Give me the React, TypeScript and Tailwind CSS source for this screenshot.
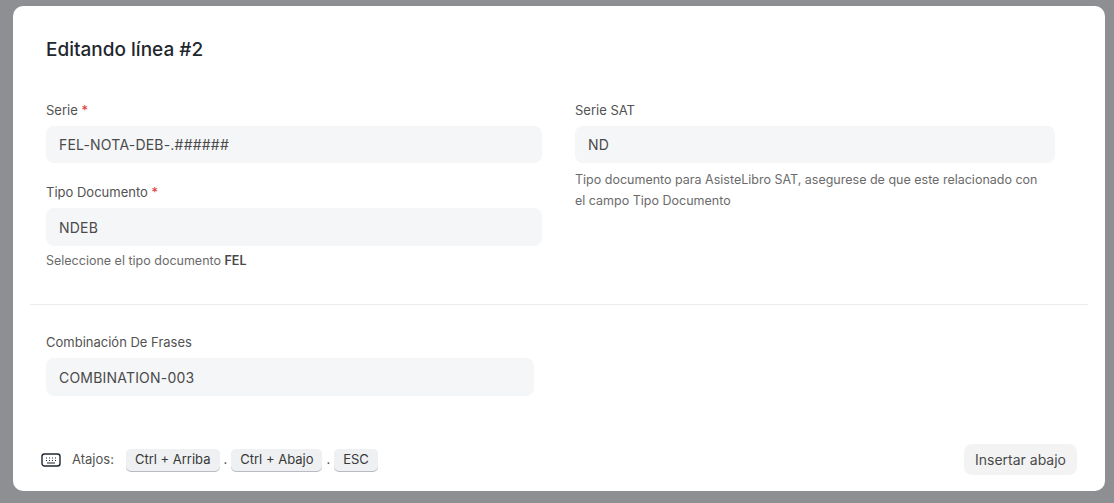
import React from "react";

const Kbd = ({ children }: { children: React.ReactNode }) => (
  <span className="inline-flex h-[22px] items-center rounded-[5px] bg-[#eef0f2] px-[9px] text-[13px] text-[#383838] shadow-[0_1px_0_#b8bcc2]">{children}</span>
);

export default function App() {
  return (
    <div className="min-h-[503px] w-[1114px] bg-[#8d8f93] pt-[6px] pl-[13px]" style={{ fontFamily: "Inter, 'Liberation Sans', sans-serif" }}>
      <div className="flex h-[485px] w-[1092px] flex-col rounded-[10px] bg-white">
        <div className="px-[33px] pt-[30px] text-[19px] font-medium leading-[28px] text-[#1f272e]">Editando línea #2</div>
        <div className="mt-[38px] flex gap-[33px] px-[33px]">
          <div className="w-[496px]">
            <div className="text-[13px] leading-[16px] text-[#525252]">Serie <span className="text-[#e03636]">*</span></div>
            <div className="mt-[8px] flex h-[37px] items-center rounded-[8px] bg-[#f5f6f7] px-[13px] text-[14px] tracking-[0.2px] text-[#4a4a4a]">FEL-NOTA-DEB-.######</div>
            <div className="mt-[21px] text-[13px] leading-[16px] text-[#525252]">Tipo Documento <span className="text-[#e03636]">*</span></div>
            <div className="mt-[8px] flex h-[38px] items-center rounded-[8px] bg-[#f5f6f7] px-[13px] text-[14px] tracking-[0.2px] text-[#4a4a4a]">NDEB</div>
            <div className="mt-[6px] text-[12.5px] leading-[18px] text-[#6b6b6b]">Seleccione el tipo documento <b className="font-semibold text-[#4a4a4a]">FEL</b></div>
          </div>
          <div className="w-[480px]">
            <div className="text-[13px] leading-[16px] text-[#525252]">Serie SAT</div>
            <div className="mt-[8px] flex h-[37px] items-center rounded-[8px] bg-[#f5f6f7] px-[13px] text-[14px] tracking-[0.2px] text-[#4a4a4a]">ND</div>
            <div className="mt-[6px] w-[465px] text-[12.5px] leading-[21px] text-[#6b6b6b]">Tipo documento para AsisteLibro SAT, asegurese de que este relacionado con el campo Tipo Documento</div>
          </div>
        </div>
        <div className="mx-[17px] mt-[34px] h-px bg-[#ededed]" />
        <div className="mt-[29px] px-[33px]">
          <div className="text-[13px] leading-[16px] text-[#525252]">Combinación De Frases</div>
          <div className="mt-[8px] flex h-[38px] w-[488px] items-center rounded-[8px] bg-[#f5f6f7] px-[13px] text-[14px] tracking-[0.2px] text-[#4a4a4a]">COMBINATION-003</div>
        </div>
        <div className="mt-auto mb-[16px] flex items-center justify-between pl-[28px] pr-[28px]">
          <div className="flex items-center gap-[4px] text-[13px] text-[#525252]">
            <svg width="20" height="16" viewBox="0 0 20 16" fill="none" stroke="#1f272e" strokeWidth="1.4">
              <rect x="1" y="2" width="18" height="12" rx="2.5" />
              <path d="M5 6h1M8 6h1M11 6h1M14 6h1M5 8.5h1M8 8.5h1M11 8.5h1M14 8.5h1M6 11h8" strokeWidth="1" />
            </svg>
            <span className="ml-[7px] mr-[8px]">Atajos:</span>
            <Kbd>Ctrl + Arriba</Kbd>
            <span>.</span>
            <Kbd>Ctrl + Abajo</Kbd>
            <span>.</span>
            <Kbd>ESC</Kbd>
          </div>
          <button className="h-[31px] rounded-[8px] bg-[#f3f3f4] px-[11px] text-[14px] text-[#4a4a4a]">Insertar abajo</button>
        </div>
      </div>
    </div>
  );
}
